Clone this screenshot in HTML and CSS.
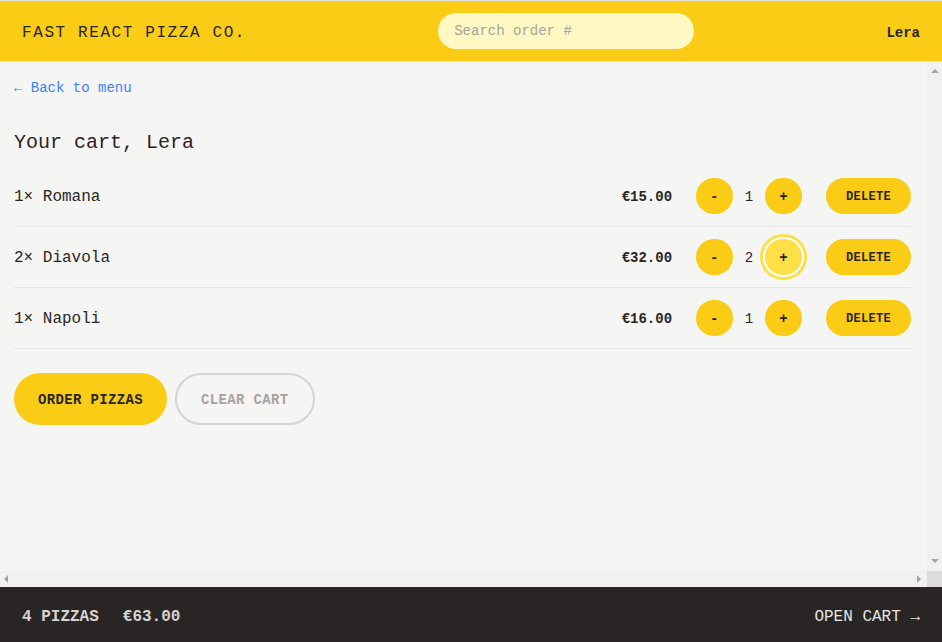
FILE: index.html
```html
<!DOCTYPE html>
<html lang="en">
<head>
<meta charset="utf-8">
<title>Fast React Pizza Co.</title>
<link rel="stylesheet" href="styles.css">
</head>
<body>
<div class="layout">
  <header class="header">
    <a class="logo" href="#">Fast React Pizza Co.</a>
    <form class="search-form">
      <input class="search" type="text" placeholder="Search order #">
    </form>
    <div class="username">Lera</div>
  </header>

  <div class="viewport">
    <div class="scroller">
      <main class="cart">
        <a class="back-link" href="#">&larr; Back to menu</a>
        <h2 class="cart-title">Your cart, Lera</h2>
        <ul class="cart-list">
          <li class="cart-item">
            <p class="item-name">1&times; Romana</p>
            <div class="item-actions">
              <p class="item-price">€15.00</p>
              <div class="qty">
                <button class="btn btn-round">-</button>
                <span class="qty-num">1</span>
                <button class="btn btn-round">+</button>
              </div>
              <button class="btn btn-small">Delete</button>
            </div>
          </li>
          <li class="cart-item">
            <p class="item-name">2&times; Diavola</p>
            <div class="item-actions">
              <p class="item-price">€32.00</p>
              <div class="qty">
                <button class="btn btn-round">-</button>
                <span class="qty-num">2</span>
                <button class="btn btn-round is-focused">+</button>
              </div>
              <button class="btn btn-small">Delete</button>
            </div>
          </li>
          <li class="cart-item">
            <p class="item-name">1&times; Napoli</p>
            <div class="item-actions">
              <p class="item-price">€16.00</p>
              <div class="qty">
                <button class="btn btn-round">-</button>
                <span class="qty-num">1</span>
                <button class="btn btn-round">+</button>
              </div>
              <button class="btn btn-small">Delete</button>
            </div>
          </li>
        </ul>
        <div class="cart-buttons">
          <a class="btn btn-primary" href="#">Order pizzas</a>
          <button class="btn btn-secondary">Clear cart</button>
        </div>
      </main>
    </div>
    <div class="vbar"><span class="arrow arrow-up"></span><span class="arrow arrow-down"></span></div>
    <div class="hbar"><span class="arrow arrow-left"></span><span class="arrow arrow-right"></span></div>
    <div class="corner"></div>
  </div>

  <footer class="footer">
    <p class="footer-summary"><span>4 pizzas</span><span>€63.00</span></p>
    <a class="open-cart" href="#">Open cart &rarr;</a>
  </footer>
</div>
</body>
</html>
```

FILE: styles.css
```css
* {
  box-sizing: border-box;
  margin: 0;
  padding: 0;
}

html, body {
  height: 100%;
}

body {
  font-family: "Liberation Mono", "DejaVu Sans Mono", monospace;
  font-size: 16px;
  line-height: 24px;
  background: #f5f5f4;
  color: #292524;
}

a {
  text-decoration: none;
  color: inherit;
}

button, input {
  font-family: inherit;
  border: none;
  outline: none;
}

.layout {
  display: grid;
  grid-template-rows: auto 1fr auto;
  height: 100vh;
}

/* Header */
.header {
  display: flex;
  align-items: center;
  justify-content: space-between;
  background: #facc15;
  border-top: 1px solid #e7e5e4;
  border-bottom: 1px solid #e7e5e4;
  padding: 12px 22px;
  text-transform: uppercase;
}

.logo {
  letter-spacing: 0.1em;
  padding-top: 4px;
}

.search {
  display: block;
  width: 256px;
  border-radius: 9999px;
  background: #fef9c3;
  padding: 8px 16px;
  font-size: 14px;
  line-height: 20px;
  color: #292524;
}

.search::placeholder {
  color: #a8a29e;
}

.username {
  font-size: 14px;
  line-height: 20px;
  font-weight: 700;
  text-transform: none;
  padding-top: 4px;
}

/* Scroll viewport with classic scrollbars */
.viewport {
  display: grid;
  grid-template-columns: 1fr 15px;
  grid-template-rows: 1fr 16px;
  min-height: 0;
}

.scroller {
  overflow: hidden;
  min-height: 0;
}

.vbar {
  display: flex;
  flex-direction: column;
  justify-content: space-between;
  align-items: center;
  background: #f1f1f1;
  padding: 7px 0 8px;
}

.hbar {
  display: flex;
  justify-content: space-between;
  align-items: center;
  background: #f1f1f1;
  padding: 0 6px 0 4px;
}

.corner {
  background: #dcdcdc;
}

.arrow {
  display: block;
  width: 0;
  height: 0;
}

.arrow-up {
  border-left: 4px solid transparent;
  border-right: 4px solid transparent;
  border-bottom: 4px solid #a3a3a3;
}

.arrow-down {
  border-left: 4px solid transparent;
  border-right: 4px solid transparent;
  border-top: 4px solid #a3a3a3;
}

.arrow-left {
  border-top: 4px solid transparent;
  border-bottom: 4px solid transparent;
  border-right: 4px solid #a3a3a3;
}

.arrow-right {
  border-top: 4px solid transparent;
  border-bottom: 4px solid transparent;
  border-left: 4px solid #a3a3a3;
}

/* Cart */
.cart {
  padding: 14px 16px 12px 14px;
}

.back-link {
  font-size: 14px;
  line-height: 20px;
  color: #3b82f6;
}

.cart-title {
  margin-top: 28px;
  padding-top: 1px;
  font-size: 20px;
  line-height: 28px;
  font-weight: 400;
}

.cart-list {
  list-style: none;
  margin-top: 9px;
  border-bottom: 1px solid #e7e5e4;
}

.cart-item {
  display: flex;
  align-items: center;
  justify-content: space-between;
  padding: 12px 0;
}

.cart-item + .cart-item {
  border-top: 1px solid #e7e5e4;
}

.item-name {
  padding-top: 2px;
}

.item-actions {
  display: flex;
  align-items: center;
  gap: 24px;
}

.item-price {
  font-size: 14px;
  line-height: 20px;
  font-weight: 700;
  padding-top: 2px;
}

.qty {
  display: flex;
  align-items: center;
  gap: 12px;
}

.qty-num {
  font-size: 14px;
  line-height: 20px;
  padding-top: 2px;
}

/* Buttons */
.btn {
  display: inline-block;
  font-size: 14px;
  line-height: 20px;
  border-radius: 9999px;
  background: #facc15;
  font-weight: 700;
  text-transform: uppercase;
  letter-spacing: 0.025em;
  color: #292524;
  cursor: pointer;
}

.btn-round {
  padding: 9px 14px 7px;
}

.btn-round.is-focused {
  background: #fde047;
  box-shadow: 0 0 0 2px #ffffff, 0 0 0 5px #fde047;
}

.btn-small {
  font-size: 12px;
  line-height: 16px;
  padding: 11px 20px 9px;
}

.cart-buttons {
  display: flex;
  gap: 8px;
  margin-top: 24px;
}

.btn-primary {
  padding: 17px 24px 15px;
}

.btn-secondary {
  background: transparent;
  border: 2px solid #d6d3d1;
  color: #a8a29e;
  padding: 15px 24px 13px;
}

/* Footer */
.footer {
  display: flex;
  align-items: center;
  justify-content: space-between;
  background: #292524;
  color: #e7e5e4;
  padding: 18px 22px 13px;
  text-transform: uppercase;
}

.footer-summary {
  display: flex;
  gap: 24px;
  color: #d6d3d1;
  font-weight: 700;
}
```
